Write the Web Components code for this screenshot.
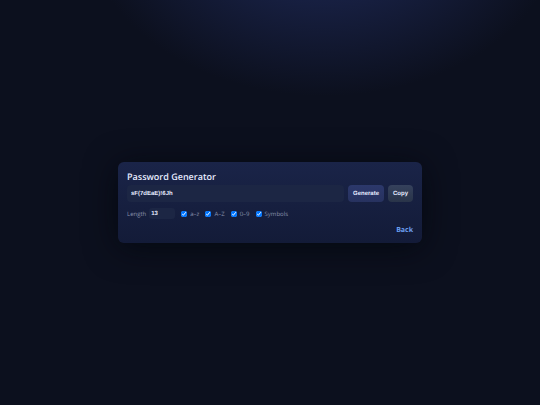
<!DOCTYPE html>
<html lang="en">
<head>
<meta charset="utf-8">
<meta name="viewport" content="width=device-width, initial-scale=1">
<title>Password Generator</title>
<style>
body {
    margin: 0;
    min-height: 100vh;
    display: grid;
    place-items: center;
    color: #e6ebff;
    background: radial-gradient(240px 176px at 60% -80px, #202c5e, #0c101e) no-repeat #0c101e;
    font: 6px/8px "Open Sans", "Noto Sans", sans-serif;
    text-rendering: geometricPrecision;
}
</style>
</head>
<body>
<password-generator value="sF(7dEaE)!6Jh" length="13">
    <span slot="title">Password Generator</span>
    <char-option slot="options" name="lower">a–z</char-option>
    <char-option slot="options" name="upper">A–Z</char-option>
    <char-option slot="options" name="digits">0–9</char-option>
    <char-option slot="options" name="symbols">Symbols</char-option>
    <a slot="footer" href="#" style="color: #6c9ff0; font-size: 7px; font-weight: 700; text-decoration: none">Back</a>
</password-generator>

<script>
const charsets = {
    lower: "abcdefghijklmnopqrstuvwxyz",
    upper: "ABCDEFGHIJKLMNOPQRSTUVWXYZ",
    digits: "0123456789",
    symbols: "!@#$%^&*()-_=+[]{};:,.?",
};

class CharOption extends HTMLElement {
    constructor() {
        super();
        this.shadow = this.attachShadow({ mode: "open" });
        this.shadow.innerHTML = /*html*/`
<style>
:host {
    display: block;
}
label {
    display: flex;
    align-items: center;
    gap: 3px;
}
input {
    width: 6px;
    height: 6px;
    margin: 0;
}
</style>
<label><input type="checkbox" checked><slot></slot></label>
        `;
    }

    get checked() {
        return this.shadow.querySelector("input").checked;
    }
}

class SoftButton extends HTMLElement {
    constructor() {
        super();
        this.attachShadow({ mode: "open" }).innerHTML = /*html*/`
<style>
:host {
    display: flex;
}
button {
    padding: 5px 5px 4px;
    border: 0;
    border-radius: 4px;
    background: var(--button-background, linear-gradient(#2c386b, #27325f));
    color: #e6ebff;
    font: 700 6px/8px "Liberation Sans", sans-serif;
    text-rendering: inherit;
    cursor: pointer;
}
</style>
<button type="button"><slot></slot></button>
        `;
    }
}

class PasswordGenerator extends HTMLElement {
    constructor() {
        super();
        this.shadow = this.attachShadow({ mode: "open" });
    }

    generate() {
        const options = [...this.querySelectorAll("char-option")].filter(o => o.checked);
        const pool = options.map(o => charsets[o.getAttribute("name")]).join("");
        const length = parseInt(this.shadow.querySelector("#length").value) || 0;
        const values = crypto.getRandomValues(new Uint32Array(pool ? length : 0));
        this.output.value = [...values].map(v => pool[v % pool.length]).join("");
    }

    connectedCallback() {
        this.shadow.innerHTML = /*html*/`
<style>
:host {
    box-sizing: border-box;
    width: calc(100% - 16px);
    max-width: 304px;
    padding: 9px 9px 7px;
    border-radius: 6px;
    background: linear-gradient(#1a2448, #131b38);
    box-shadow: 0 4px 32px rgba(0, 6, 12, 0.7);
}
h1 {
    margin: 0 0 2px;
    font-size: 9px;
    font-weight: 600;
    line-height: 12px;
}
.row {
    display: flex;
    align-items: center;
    gap: 4px;
}
.options {
    flex-wrap: wrap;
    gap: 6px;
    margin: 6px 0 7px;
    color: #8a93ad;
}
label {
    display: flex;
    align-items: center;
    gap: 3px;
}
input {
    box-sizing: border-box;
    min-width: 0;
    border: 0;
    background: #1c2644;
    color: #e6ebff;
    font: 700 6px/8px "Liberation Sans", sans-serif;
    text-rendering: inherit;
}
#output {
    flex: 1;
    padding: 5px 4px 4px;
    border-radius: 4px;
}
#length {
    width: 26px;
    padding: 2px 2px 1px;
    border-radius: 3px;
}
.copy {
    --button-background: linear-gradient(#35415c, #293449);
}
footer {
    display: flex;
    justify-content: flex-end;
    line-height: 10px;
}
</style>

<h1><slot name="title"></slot></h1>
<div class="row">
    <input id="output" type="text" aria-label="Password" readonly>
    <soft-button class="generate">Generate</soft-button>
    <soft-button class="copy">Copy</soft-button>
</div>
<div class="row options">
    <label>Length <input id="length" type="number" min="4" max="64"></label>
    <slot name="options"></slot>
</div>
<footer><slot name="footer"></slot></footer>
        `;

        this.output = this.shadow.querySelector("#output");
        this.output.value = this.getAttribute("value") || "";
        this.shadow.querySelector("#length").value = this.getAttribute("length") || 12;

        this.shadow.querySelector(".generate").addEventListener("click", () => {
            this.generate();
        });
        this.shadow.querySelector(".copy").addEventListener("click", () => {
            navigator.clipboard.writeText(this.output.value);
        });
    }
}

customElements.define("char-option", CharOption);
customElements.define("soft-button", SoftButton);
customElements.define("password-generator", PasswordGenerator);
</script>
</body>
</html>
